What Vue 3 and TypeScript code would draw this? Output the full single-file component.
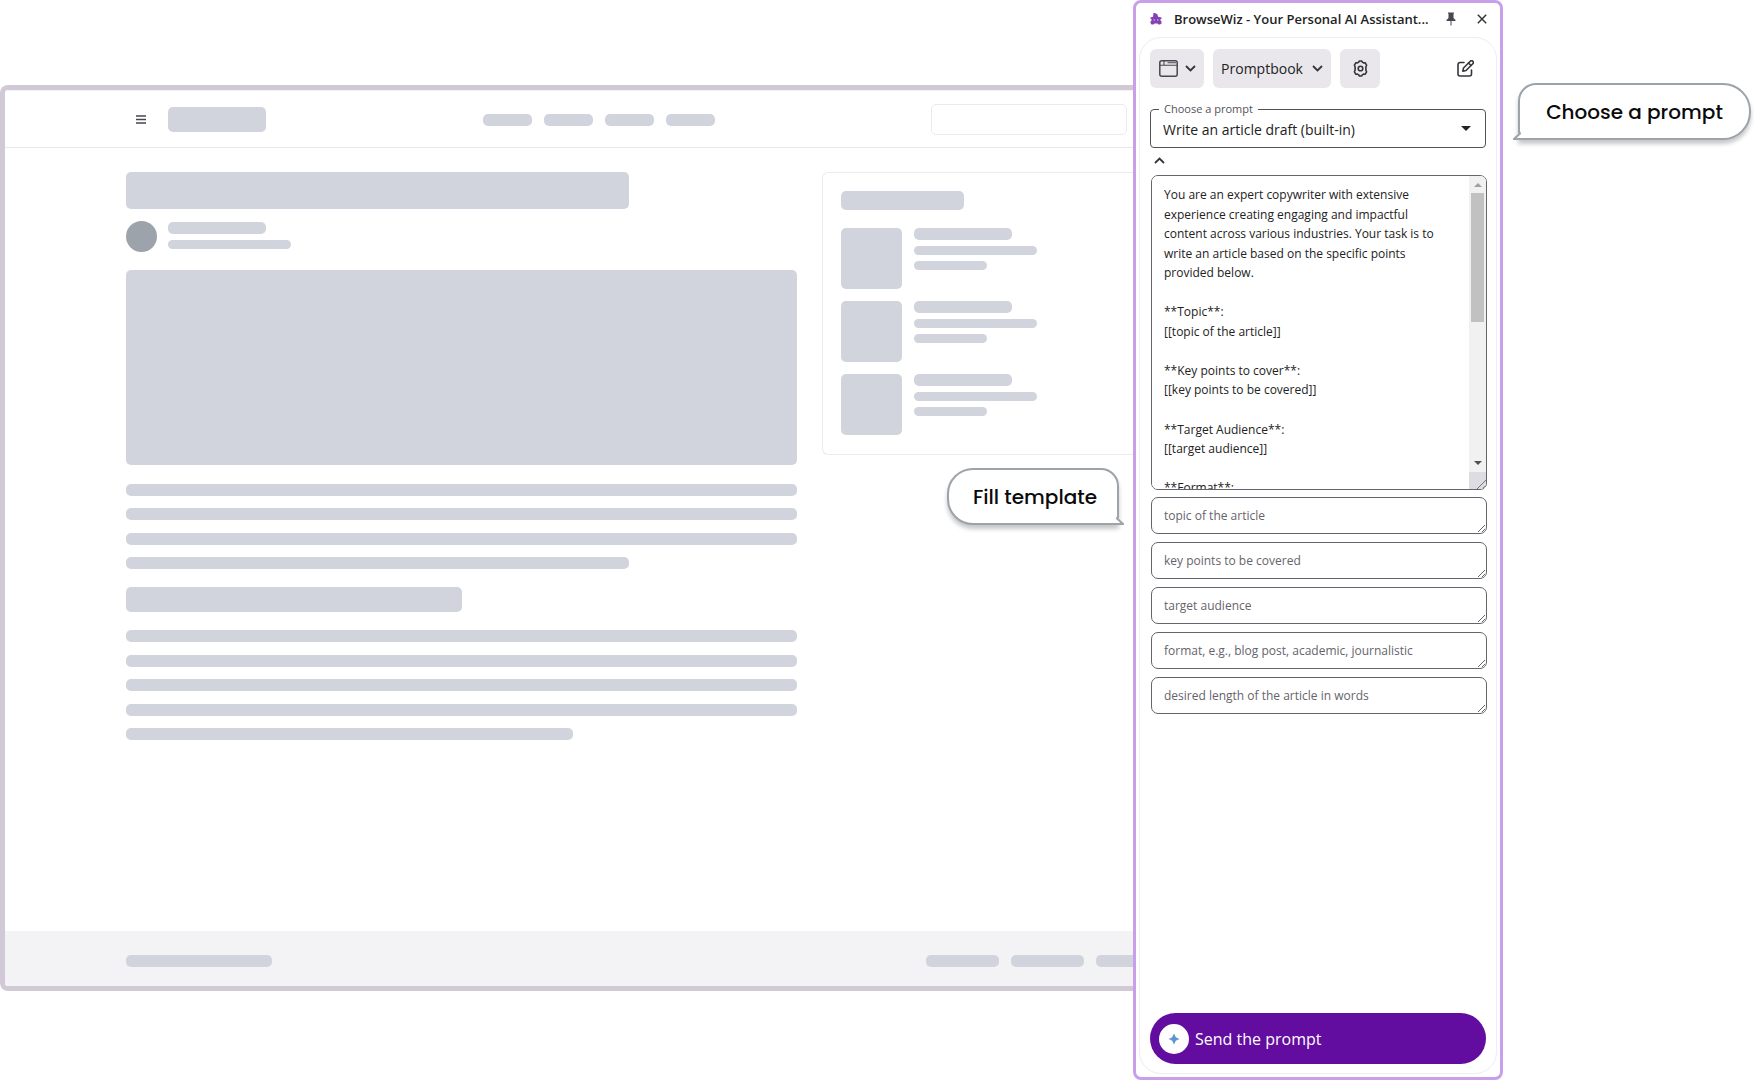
<script setup lang="ts">
import { ref } from 'vue'

interface Field {
  id: string
  placeholder: string
}

const relatedItems = [1, 2, 3]
const navItems = [1, 2, 3, 4]
const footerLinks = [1, 2, 3]

const prompts = ['Write an article draft (built-in)']
const selected = ref(prompts[0])

const template = ref(`You are an expert copywriter with extensive
experience creating engaging and impactful
content across various industries. Your task is to
write an article based on the specific points
provided below.

**Topic**:
[[topic of the article]]

**Key points to cover**:
[[key points to be covered]]

**Target Audience**:
[[target audience]]

**Format**:
[[format, e.g., blog post, academic, journalistic]]

**Length**:
[[desired length of the article in words]]`)

const fields: Field[] = [
  { id: 'topic', placeholder: 'topic of the article' },
  { id: 'points', placeholder: 'key points to be covered' },
  { id: 'audience', placeholder: 'target audience' },
  { id: 'format', placeholder: 'format, e.g., blog post, academic, journalistic' },
  { id: 'length', placeholder: 'desired length of the article in words' },
]
</script>

<template>
  <main class="scene">
    <section class="browser-area">
      <div class="browser">
        <header class="site-header">
          <div class="brand">
            <button class="menu" type="button" aria-label="Menu">
              <svg width="10" height="9" viewBox="0 0 10 9" aria-hidden="true">
                <path d="M0 1h10M0 4.5h10M0 8h10" stroke="#4a4450" stroke-width="1.3" />
              </svg>
            </button>
            <span class="bone logo"></span>
          </div>
          <nav class="site-nav" aria-label="Site">
            <span v-for="n in navItems" :key="n" class="bone nav-item"></span>
          </nav>
          <input class="search" type="text" aria-label="Search" />
        </header>

        <div class="site-body">
          <article class="article">
            <span class="bone title"></span>
            <div class="author">
              <span class="avatar"></span>
              <div class="lines">
                <span class="bone line-name"></span>
                <span class="bone line-thin"></span>
              </div>
            </div>
            <span class="bone hero"></span>
            <div class="paragraph intro">
              <span class="bone"></span>
              <span class="bone"></span>
              <span class="bone"></span>
              <span class="bone three-quarters"></span>
            </div>
            <span class="bone subtitle"></span>
            <div class="paragraph detail">
              <span class="bone"></span>
              <span class="bone"></span>
              <span class="bone"></span>
              <span class="bone"></span>
              <span class="bone two-thirds"></span>
            </div>
          </article>

          <aside class="related">
            <span class="bone related-title"></span>
            <div v-for="n in relatedItems" :key="n" class="related-item">
              <span class="bone thumb"></span>
              <div class="lines">
                <span class="bone line-name"></span>
                <span class="bone line-thin"></span>
                <span class="bone line-thin short"></span>
              </div>
            </div>
          </aside>
        </div>

        <footer class="site-footer">
          <span class="bone copyright"></span>
          <div class="footer-links">
            <span v-for="n in footerLinks" :key="n" class="bone footer-link"></span>
          </div>
        </footer>
      </div>

      <div class="callout callout-fill">
        Fill template
        <svg class="tail" width="14" height="16" viewBox="0 0 14 16" aria-hidden="true">
          <path d="M0 0H8V8L13 14H0Z" fill="#fff" />
          <path d="M8 0V6.500L7 8.500L13 14H0" fill="none" stroke="#9ca3aa" stroke-width="2" />
        </svg>
      </div>
    </section>

    <section class="panel">
      <header class="panel-header">
        <svg class="wizard" width="12" height="14" viewBox="0 0 12 14" aria-hidden="true">
          <path
            d="M3.500 0.800L6 1.500L7.500 2.500L8 4.800L11.500 5.500V7H10.500V8.500L11.500 9.500V11.500L10 12.500H8.500L7.500 11.500H4.500L3.500 12.500H1.500L0.500 11V9.500L1.500 8.500V7H0.500V5.500L3 4.800Z"
            fill="#8540b4"
          />
          <path d="M3.500 8h1.500M7 8h1.500" stroke="#e4d2f2" stroke-width="0.900" />
        </svg>
        <h1>BrowseWiz - Your Personal AI Assistant...</h1>
        <button class="plain pin" type="button" aria-label="Pin">
          <svg width="10" height="14" viewBox="0 0 10 14" aria-hidden="true">
            <path d="M2 0.500H8V1.500H7.500V6L9.500 8V9H5.500V13.500H4.500V9H0.500V8L2.500 6V1.500H2Z" fill="#4a4650" />
          </svg>
        </button>
        <button class="plain" type="button" aria-label="Close">
          <svg width="10" height="10" viewBox="0 0 10 10" aria-hidden="true">
            <path d="M0.800 0.800L9.200 9.200M9.200 0.800L0.800 9.200" stroke="#37343b" stroke-width="1.500" />
          </svg>
        </button>
      </header>

      <form class="panel-body" @submit.prevent>
        <div class="toolbar">
          <button class="tool window-tool" type="button" aria-label="Window">
            <svg width="19" height="17" viewBox="0 0 19 17" fill="none" stroke="#4a4650" aria-hidden="true">
              <rect x="0.800" y="0.800" width="17.400" height="15.400" rx="2" stroke-width="1.500" />
              <path d="M1 5.200H18M5 1V5M8.500 2.800H17" stroke-width="1.100" />
            </svg>
            <svg class="chevron" width="11" height="7" viewBox="0 0 11 7" aria-hidden="true">
              <path d="M1 1L5.500 5.500L10 1" />
            </svg>
          </button>
          <button class="tool book-tool" type="button">
            Promptbook
            <svg class="chevron" width="11" height="7" viewBox="0 0 11 7" aria-hidden="true">
              <path d="M1 1L5.500 5.500L10 1" />
            </svg>
          </button>
          <button class="tool gear-tool" type="button" aria-label="Settings">
            <svg width="17" height="17" viewBox="0 0 17 17" fill="none" stroke="#37343b" stroke-width="1.600" stroke-linejoin="round" aria-hidden="true">
              <path d="M6.600 2.200L7.400 1H9.600L10.400 2.200L11.500 2.900L13.100 2.700L14.600 5.200L13.900 6.800V10.200L14.600 11.800L13.100 14.300L11.500 14.100L10.400 14.800L9.600 16H7.400L6.600 14.800L5.500 14.100L3.900 14.300L2.400 11.800L3.100 10.200V6.800L2.400 5.200L3.900 2.700L5.500 2.900Z" />
              <circle cx="8.500" cy="8.500" r="2.300" />
            </svg>
          </button>
          <button class="plain compose" type="button" aria-label="New chat">
            <svg width="17" height="17" viewBox="0 0 17 17" fill="none" stroke="#37343b" stroke-width="1.600" stroke-linejoin="round" stroke-linecap="round" aria-hidden="true">
              <path d="M7 2.500H3A2 2 0 0 0 1 4.500V14A2 2 0 0 0 3 16H12.500A2 2 0 0 0 14.500 14V10" />
              <path d="M13.300 1.200A1.400 1.400 0 0 1 15.800 3.700L9 10.500L5.800 11.200L6.500 8Z" />
              <path d="M11.500 3L14 5.500" />
            </svg>
          </button>
        </div>

        <fieldset class="picker">
          <legend><label for="prompt">Choose a prompt</label></legend>
          <select id="prompt" v-model="selected">
            <option v-for="p in prompts" :key="p" :value="p">{{ p }}</option>
          </select>
          <svg class="picker-arrow" width="10" height="5" viewBox="0 0 10 5" aria-hidden="true">
            <path d="M0 0H10L5 5Z" fill="#222" />
          </svg>
        </fieldset>

        <button class="plain collapse" type="button" aria-label="Hide template">
          <svg class="chevron" width="11" height="7" viewBox="0 0 11 7" aria-hidden="true">
            <path d="M1 6L5.500 1.500L10 6" />
          </svg>
        </button>

        <div class="template-box">
          <textarea v-model="template" class="template" aria-label="Prompt template"></textarea>
          <div class="scrollbar" aria-hidden="true">
            <svg width="8" height="4" viewBox="0 0 8 4"><path d="M0 4H8L4 0Z" fill="#a0a0a0" /></svg>
            <span class="thumb-bar"></span>
            <svg width="8" height="4" viewBox="0 0 8 4"><path d="M0 0H8L4 4Z" fill="#505050" /></svg>
            <span class="corner">
              <svg width="9" height="9" viewBox="0 0 9 9"><path d="M0 9L9 0M5 9L9 5" stroke="#777" /></svg>
            </span>
          </div>
        </div>

        <div class="fields">
          <textarea
            v-for="f in fields"
            :id="f.id"
            :key="f.id"
            class="field"
            rows="1"
            :placeholder="f.placeholder"
            :aria-label="f.placeholder"
          ></textarea>
        </div>

        <button class="send" type="submit">
          <span class="send-badge">
            <svg width="12" height="12" viewBox="0 0 12 12" aria-hidden="true">
              <defs>
                <linearGradient id="spark" x1="0" x2="1" y1="0" y2="0">
                  <stop offset="0" stop-color="#b08ad0" />
                  <stop offset="0.400" stop-color="#5b93d0" />
                  <stop offset="1" stop-color="#5b9bd0" />
                </linearGradient>
              </defs>
              <path d="M6 0.500L7.800 4.200L11.500 6L7.800 7.800L6 11.500L4.200 7.800L0.500 6L4.200 4.200Z" fill="url(#spark)" />
            </svg>
          </span>
          Send the prompt
        </button>
      </form>
    </section>

    <section class="notes">
      <div class="callout callout-choose">
        Choose a prompt
        <svg class="tail" width="14" height="16" viewBox="0 0 14 16" aria-hidden="true">
          <path d="M14 0H6V8L1 14H14Z" fill="#fff" />
          <path d="M6 0V6.500L7 8.500L1 14H14" fill="none" stroke="#9ca3aa" stroke-width="2" />
        </svg>
      </div>
    </section>
  </main>
</template>

<style>
body {
  margin: 0;
  background: #fff;
}
</style>

<style scoped>
* {
  box-sizing: border-box;
}

.scene {
  display: grid;
  grid-template-columns: minmax(0, 1fr) 370px 252px;
  min-height: 100vh;
  color: #222;
  font-family: 'Segoe UI', 'Open Sans', 'Noto Sans', sans-serif;
}

button,
input,
select,
textarea {
  margin: 0;
  color: inherit;
  font-family: inherit;
}

button {
  padding: 0;
  border: 0;
  background: none;
}

.browser-area {
  position: relative;
  display: flex;
  padding: 85px 0 89px;
}

.browser {
  display: flex;
  flex: 1;
  flex-direction: column;
  min-width: 0;
  overflow: hidden;
  border: 5px solid #d1c9d6;
  border-right: 0;
  border-radius: 8px 0 0 8px;
}

.bone {
  display: block;
  height: 12px;
  border-radius: 5px;
  background: #d1d4dc;
}

.site-header {
  display: flex;
  align-items: center;
  justify-content: space-between;
  height: 58px;
  padding: 1px 6px 0 121px;
  border-top: 1px solid #f3f3f5;
  border-bottom: 1px solid #e6e7ea;
}

.brand {
  display: flex;
  align-items: center;
  gap: 12px;
}

.menu {
  display: grid;
  place-items: center;
  width: 30px;
  height: 30px;
}

.logo {
  width: 98px;
  height: 25px;
}

.site-nav,
.footer-links {
  display: flex;
  gap: 12px;
}

.nav-item {
  width: 49px;
}

.search {
  width: 196px;
  height: 31px;
  border: 1px solid #e9eaed;
  border-radius: 5px;
  background: #fff;
}

.site-body {
  display: flex;
  flex: 1;
  align-items: flex-start;
  gap: 25px;
  padding: 24px 0 24px 121px;
}

.article {
  display: flex;
  flex: 1;
  flex-direction: column;
}

.title {
  width: 75%;
  height: 37px;
}

.author {
  display: flex;
  gap: 11px;
  margin: 12px 0 18px;
}

.avatar {
  width: 31px;
  height: 31px;
  border-radius: 50%;
  background: #9ca3ab;
}

.lines {
  display: flex;
  flex-direction: column;
  gap: 6px;
}

.author .lines {
  padding-top: 1px;
}

.line-name {
  width: 98px;
}

.line-thin {
  width: 123px;
  height: 9px;
}

.short {
  width: 73px;
}

.hero {
  height: 195px;
}

.paragraph {
  display: flex;
  flex-direction: column;
  justify-content: space-between;
}

.intro {
  min-height: 85px;
  margin: 19px 0 18px;
}

.detail {
  min-height: 110px;
  margin-top: 18px;
}

.three-quarters {
  width: 75%;
}

.two-thirds {
  width: calc(200% / 3);
}

.subtitle {
  width: 50%;
  height: 25px;
}

.related {
  display: flex;
  flex-direction: column;
  gap: 12px;
  width: 311px;
  padding: 18px 18px 19px;
  border: 1px solid #ececef;
  border-right: 0;
  border-radius: 6px 0 0 6px;
}

.related-title {
  width: 123px;
  height: 19px;
  margin-bottom: 6px;
}

.related-item {
  display: flex;
  gap: 12px;
}

.thumb {
  width: 61px;
  height: 61px;
}

.site-footer {
  display: flex;
  align-items: center;
  justify-content: space-between;
  height: 55px;
  padding: 4px 0 0 121px;
  background: #f3f3f5;
}

.copyright {
  width: 146px;
}

.footer-links {
  margin-right: -36px;
}

.footer-link {
  width: 73px;
}

.callout {
  position: relative;
  display: grid;
  place-items: center;
  height: 57px;
  border: 2px solid #9ca3aa;
  background: #fff;
  box-shadow: 0 4px 4px rgba(0, 0, 0, 0.22);
  color: #0a0a0a;
  font-family: Poppins, Inter, sans-serif;
  font-size: 20px;
  font-weight: 500;
  white-space: nowrap;
}

.callout-fill {
  position: absolute;
  top: 468px;
  right: 14px;
  width: 172px;
  padding-left: 4px;
  border-radius: 26px 18px 0 26px;
}

.callout-choose {
  border-radius: 18px 28px 28px 0;
}

.tail {
  position: absolute;
  bottom: -3px;
}

.callout-fill .tail {
  right: -7px;
}

.callout-choose .tail {
  left: -7px;
}

.panel {
  display: flex;
  flex-direction: column;
  padding: 0 3px 3px;
  border: 3px solid #c99fea;
  border-radius: 8px;
  background: #fff;
}

.panel-header {
  display: flex;
  align-items: center;
  height: 34px;
  padding: 0 10px 3px 11px;
}

.wizard {
  margin-right: 12px;
}

.panel-header h1 {
  flex: 1;
  margin: 0;
  font-size: 13px;
  font-weight: 600;
  white-space: nowrap;
}

.plain {
  display: grid;
  place-items: center;
}

.pin {
  margin-right: 21px;
}

.panel-body {
  display: flex;
  flex: 1;
  flex-direction: column;
  padding: 11px 10px 9px;
  border: 1px solid #eeedf1;
  border-radius: 22px;
}

.toolbar {
  display: flex;
  align-items: center;
  gap: 9px;
}

.tool {
  display: flex;
  align-items: center;
  justify-content: center;
  gap: 7px;
  height: 39px;
  border-radius: 6px;
  background: #e9e7ec;
}

.window-tool {
  width: 54px;
}

.book-tool {
  gap: 9px;
  width: 118px;
  font-size: 14px;
}

.gear-tool {
  width: 40px;
}

.compose {
  width: 42px;
  height: 39px;
  margin-left: auto;
}

.chevron {
  fill: none;
  stroke: #37343b;
  stroke-width: 1.8;
}

.picker {
  position: relative;
  min-width: 0;
  height: 47px;
  margin: 13px 0 0;
  padding: 0 12px;
  border: 1px solid #55515a;
  border-radius: 4px;
}

.picker legend {
  margin-left: -4px;
  padding: 0 5px;
  color: #55515a;
  font-size: 11px;
  line-height: 16px;
}

.picker select {
  display: block;
  width: 100%;
  height: 24px;
  border: 0;
  background: none;
  font-size: 14px;
  appearance: none;
}

.picker-arrow {
  position: absolute;
  right: 14px;
  bottom: 10px;
  pointer-events: none;
}

.collapse {
  width: 18px;
  height: 27px;
  padding-bottom: 3px;
}

.template-box,
.fields {
  margin: 0 -1px 7px 1px;
}

.fields {
  display: flex;
  flex-direction: column;
  gap: 8px;
}

.template,
.field {
  display: block;
  width: 100%;
  padding: 8px 12px;
  border: 1px solid #67636c;
  border-radius: 7px;
  background: #fff;
  font-size: 12px;
  line-height: 20px;
}

.field {
  height: 37px;
  overflow: hidden;
  resize: vertical;
}

.field::placeholder {
  color: #66646b;
}

.template-box {
  position: relative;
}

.template {
  height: 315px;
  padding-top: 9px;
  overflow-y: scroll;
  line-height: 1.63;
  resize: none;
  scrollbar-width: none;
  white-space: pre;
}

.scrollbar {
  position: absolute;
  top: 1px;
  right: 1px;
  bottom: 1px;
  display: flex;
  flex-direction: column;
  align-items: center;
  width: 17px;
  padding-top: 7px;
  overflow: hidden;
  border-radius: 0 6px 6px 0;
  background: #f1f1f1;
}

.thumb-bar {
  width: 13px;
  height: 129px;
  margin: 6px 0 auto;
  background: #c1c1c1;
}

.corner {
  display: grid;
  place-items: end;
  width: 17px;
  height: 17px;
  margin-top: 7px;
  background: #dcdde2;
}

.send {
  display: flex;
  align-items: center;
  gap: 6px;
  height: 51px;
  margin-top: auto;
  padding: 0 9px;
  border-radius: 26px;
  background: #620ca0;
  color: #fff;
  font-size: 16px;
}

.send-badge {
  display: grid;
  place-items: center;
  width: 30px;
  height: 30px;
  border-radius: 50%;
  background: #fff;
}

.notes {
  padding: 83px 4px 0 15px;
}
</style>
